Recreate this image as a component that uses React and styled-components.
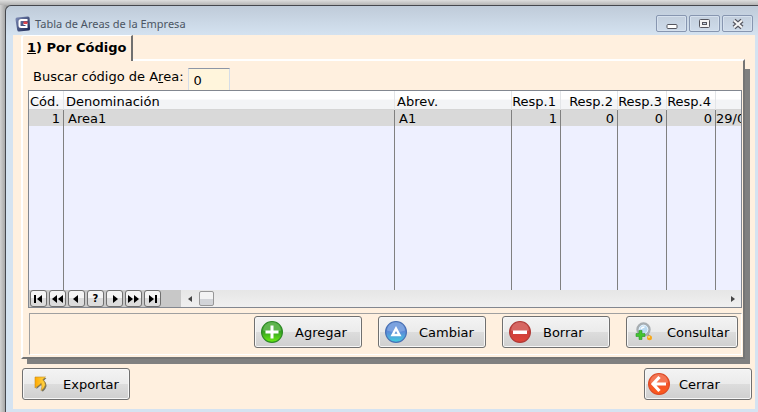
import React, { useState } from 'react';
import styled, { createGlobalStyle } from 'styled-components';

const GlobalStyle = createGlobalStyle`
  * {
    box-sizing: border-box;
  }
  body {
    margin: 0;
    overflow: hidden;
    font-family: 'DejaVu Sans', Verdana, sans-serif;
    font-size: 13px;
    color: #000;
  }
  button, input {
    font: inherit;
    color: inherit;
  }
`;

const Desktop = styled.div`
  min-height: 100vh;
  padding: 5px 0 0 5px;
  background: linear-gradient(#dedede, #b4b4b4 5px, transparent 5px),
    linear-gradient(90deg, #d2d2d2, #a8a8a8 5px);
`;

const Window = styled.main`
  display: flex;
  flex-direction: column;
  min-height: calc(100vh - 5px);
  padding: 0 3px 3px 7px;
  border-top: 1px solid #45474d;
  border-left: 1px solid #45474d;
  border-top-left-radius: 6px;
  background: linear-gradient(#bfcbd9, #d5e3f1 30px);
`;

const TitleBar = styled.header`
  display: flex;
  align-items: center;
  height: 29px;
  padding: 6px 2px 0;
`;

const Title = styled.h1`
  flex: 1;
  margin: 0 0 0 4px;
  font-family: 'Noto Sans', 'Open Sans', sans-serif;
  font-size: 11px;
  font-weight: 400;
  line-height: 16px;
  color: #4b5563;
`;

const WindowButtons = styled.div`
  display: flex;
  gap: 2px;
`;

const WindowButton = styled.button`
  display: flex;
  align-items: center;
  justify-content: center;
  width: 31px;
  height: 17px;
  padding: 0;
  border: 1px solid #8796b0;
  border-radius: 2px;
  background: linear-gradient(#c3cfdd, #cedbea);
  box-shadow: inset 0 0 0 1px #d6e1ee;
`;

const Body = styled.div`
  flex: 1;
  padding: 0 3px 9px 8px;
  background: #fff0df;
`;

const TabBar = styled.div`
  display: flex;
`;

const Tab = styled.button`
  position: relative;
  z-index: 1;
  height: 26px;
  margin-bottom: -2px;
  padding: 0 5px 1px 4px;
  border: solid #fff;
  border-width: 1px 2px 0 2px;
  border-right-color: #707070;
  border-radius: 3px 0 0 0;
  background: #fff0df;
  font-weight: 700;
  line-height: 20px;
`;

const Sheet = styled.section`
  position: relative;
  z-index: 0;
  margin-right: 7px;
  &::before {
    content: '';
    position: absolute;
    z-index: -1;
    inset: 10px -5px -5px 6px;
    background: #808080;
  }
`;

const SheetFace = styled.div`
  padding: 7px 1px 2px 5px;
  border: 2px solid #fff;
  border-right-color: #757575;
  border-bottom-color: #757575;
  background: #fff0df;
`;

const SearchRow = styled.div`
  display: flex;
  gap: 4px;
  padding-left: 5px;
  line-height: 18px;
`;

const SearchInput = styled.input`
  width: 42px;
  height: 22px;
  padding: 1px 5px 0;
  border: 1px solid #d5dde8;
  border-top-color: #8d95a5;
  border-bottom: 0;
  background: #fff5dc;
  outline: none;
`;

const List = styled.div`
  border: 1px solid #828790;
  background: #eef0ff;
`;

const Table = styled.table`
  width: 100%;
  table-layout: fixed;
  border-collapse: separate;
  border-spacing: 0;
  line-height: 15px;
  white-space: nowrap;
`;

const Col = styled.col`
  width: ${(props) => props.$width};
`;

const HeadCell = styled.th`
  height: 19px;
  padding: ${(props) => (props.$right ? '2px 4px 0 0' : '2px 0 0 2px')};
  overflow: hidden;
  border-right: 1px solid #e3e5e8;
  border-bottom: 1px solid #d5d5d5;
  background: linear-gradient(#fff 45%, #f3f4f6 50%);
  font-weight: 400;
  text-align: ${(props) => (props.$right ? 'right' : 'left')};
  &:first-child {
    padding-left: 1px;
  }
  &:last-child {
    border-right: 0;
  }
`;

const Cell = styled.td`
  height: 16px;
  padding: ${(props) => (props.$right ? '1px 3px 0 0' : '1px 0 0 4px')};
  overflow: hidden;
  border-right: 1px solid #808080;
  background: ${(props) => (props.$selected ? '#d9d9d9' : 'transparent')};
  text-align: ${(props) => (props.$right ? 'right' : 'left')};
  &:last-child {
    padding-left: 0;
    border-right: 0;
  }
`;

const FillRow = styled.tr`
  height: 164px;
`;

const ListFooter = styled.div`
  display: flex;
  height: 17px;
`;

const NavBar = styled.div`
  display: flex;
  gap: 2px;
  width: 152px;
  padding: 0 1px;
  background: #c8c8c8;
`;

const NavButton = styled.button`
  display: flex;
  align-items: center;
  justify-content: center;
  width: 17px;
  height: 17px;
  padding: 0;
  border: 1px solid #707070;
  border-radius: 3px;
  background: linear-gradient(#f4f4f4 50%, #dcdcdc 50%);
  font-size: 10px;
  font-weight: 700;
  line-height: 14px;
`;

const ScrollBar = styled.div`
  display: flex;
  flex: 1;
  align-items: center;
  background: linear-gradient(#e6e6e6, #f0f0f0);
`;

const ScrollButton = styled.button`
  display: flex;
  align-items: center;
  justify-content: center;
  width: 18px;
  height: 16px;
  padding: 0;
  border: 0;
  background: none;
`;

const ScrollTrack = styled.div`
  flex: 1;
`;

const ScrollThumb = styled.div`
  width: 15px;
  height: 15px;
  border: 1px solid #979797;
  border-radius: 2px;
  background: linear-gradient(#f3f3f3 50%, #d2d4d8 50%);
`;

const Actions = styled.div`
  display: flex;
  justify-content: flex-end;
  gap: 16px;
  height: 42px;
  margin: 5px 0 0 1px;
  padding: 2px 3px 0;
  border: 1px solid #fff;
  border-top-color: #a0a0a0;
  border-left-color: #a0a0a0;
`;

const Footer = styled.footer`
  display: flex;
  justify-content: space-between;
  padding: 9px 0 0 1px;
`;

const ActionButton = styled.button`
  display: flex;
  align-items: center;
  width: ${(props) => (props.$wide ? '112px' : '108px')};
  height: 32px;
  padding: 0 0 0 ${(props) => (props.$tight ? '3px' : '6px')};
  border: 1px solid #707070;
  border-radius: 3px;
  background: linear-gradient(#f3f3f3, #ebebeb 50%, #dddddd 50%, #cfcfcf);
  box-shadow: inset 0 0 0 1px #f7f7f7;
  svg {
    flex: none;
    margin-right: ${(props) => (props.$tight ? '9px' : '12px')};
  }
`;

const columns = [
  { title: 'Cód.', width: '35px' },
  { title: 'Denominación', width: '331px' },
  { title: 'Abrev.', width: '117px' },
  { title: 'Resp.1', width: '49px', right: true },
  { title: 'Resp.2', width: '57px', right: true },
  { title: 'Resp.3', width: '49px', right: true },
  { title: 'Resp.4', width: '49px', right: true },
  { title: '', width: 'auto' },
];

const areas = [
  { codigo: 1, nombre: 'Area1', abrev: 'A1', resp: [1, 0, 0, 0], fecha: '29/0' },
];

const navButtons = [
  { label: 'Primero', path: 'M1 1h2v8H1zM9 1v8L4 5z' },
  { label: 'Página anterior', path: 'M5 1v8L0 5zM11 1v8L6 5z' },
  { label: 'Anterior', path: 'M7 1v8L2 5z' },
  { label: 'Buscar' },
  { label: 'Siguiente', path: 'M4 1v8L9 5z' },
  { label: 'Página siguiente', path: 'M0 1v8L5 5zM6 1v8L11 5z' },
  { label: 'Último', path: 'M2 1v8L7 5zM8 1h2v8H8z' },
];

function AppIcon() {
  return (
    <svg width="16" height="16" viewBox="0 0 16 16">
      <defs>
        <linearGradient id="app" x2="1" y2="1">
          <stop offset="0" stopColor="#8290ba" />
          <stop offset="1" stopColor="#14204e" />
        </linearGradient>
      </defs>
      <path d="M2 1.500 13 .5q1.500 0 1.600 1.500L15 13q0 1.500-1.500 1.500L4 15.500q-1.500 0-1.800-1.500L.5 3.500Q.4 1.700 2 1.500z" fill="url(#app)" />
      <path d="M12.500 4H6.200Q4.500 4 4.500 5.500v4Q4.500 11 6.200 11h5.300V8H8.500" fill="none" stroke="#fff" strokeWidth="2" />
      <path d="M8.500 5.500h4v2.500h-4z" fill="#e0444a" />
    </svg>
  );
}

function RoundIcon({ id, top, bottom, edge, children }) {
  return (
    <svg width="22" height="22" viewBox="0 0 22 22">
      <defs>
        <linearGradient id={id} x2="0" y2="1">
          <stop offset="0" stopColor={top} />
          <stop offset="0.5" stopColor={top} />
          <stop offset="1" stopColor={bottom} />
        </linearGradient>
      </defs>
      <circle cx="11" cy="11" r="10.400" fill={`url(#${id})`} stroke={edge} strokeWidth="1.200" />
      <path d="M2 9.500a9 8.500 0 0 1 18 0Q11 13 2 9.500z" fill="#fff" opacity="0.200" />
      {children}
    </svg>
  );
}

function AddIcon() {
  return (
    <RoundIcon id="add" top="#37a322" bottom="#6cf00e" edge="#2d8a25">
      <path d="M9.500 4.500h3v5h5v3h-5v5h-3v-5h-5v-3h5z" fill="#fff" />
    </RoundIcon>
  );
}

function ChangeIcon() {
  return (
    <RoundIcon id="change" top="#5b8bd8" bottom="#41cfe0" edge="#4870b4">
      <path d="M11 7.500 14.500 14h-7z" fill="none" stroke="#fff" strokeWidth="2.400" />
    </RoundIcon>
  );
}

function DeleteIcon() {
  return (
    <RoundIcon id="delete" top="#cc403b" bottom="#e04438" edge="#b03a37">
      <path d="M4 9.500h14v3.500H4z" fill="#fff" />
    </RoundIcon>
  );
}

function CloseIcon() {
  return (
    <RoundIcon id="close" top="#f2552b" bottom="#ff5a18" edge="#dd4a26">
      <path d="M11.500 4 5 11l6.500 7M5.500 11H18" fill="none" stroke="#fff" strokeWidth="3.200" />
    </RoundIcon>
  );
}

function SearchIcon() {
  return (
    <svg width="22" height="22" viewBox="0 0 22 22">
      <path d="m14 12 2.500 4" stroke="#8b98a5" strokeWidth="2" />
      <circle cx="10.500" cy="8.500" r="6" fill="#b9d9f0" stroke="#a7adb1" strokeWidth="2.400" />
      <circle cx="10.500" cy="8.500" r="4.300" fill="none" stroke="#e9f5fd" strokeWidth="1" />
      <path d="M8 8q1-2 3.500-2" fill="none" stroke="#fff" strokeWidth="1.500" />
      <circle cx="16.500" cy="16.800" r="2.500" fill="#f7a81b" />
      <circle cx="16" cy="16" r="1" fill="#ffe07a" />
      <path d="M6 9.500h3v3h3v3H9v3H6v-3H3v-3h3z" fill="#43c42f" stroke="#2c972b" strokeWidth="0.600" />
    </svg>
  );
}

function ExportIcon() {
  return (
    <svg width="22" height="22" viewBox="0 0 22 22">
      <defs>
        <linearGradient id="export" x2="1" y2="0">
          <stop offset="0" stopColor="#ffa800" />
          <stop offset="1" stopColor="#ffd84a" />
        </linearGradient>
      </defs>
      <path d="M7 5h10.500L15 7.500q5.500 5-1 11l-1.500-.5q2-4 .5-6.500l-2 1.500-3.500 3z" fill="#77745f" />
      <path d="M6 4h10.500l-2.800 2.700q6 5.300-1.700 10.800 1.700-4 .2-7.200L10.300 12 6 15z" fill="url(#export)" stroke="#c58b1c" strokeWidth="0.600" />
    </svg>
  );
}

function App() {
  const [codigo, setCodigo] = useState('0');

  return (
    <>
      <GlobalStyle />
      <Desktop>
        <Window>
          <TitleBar>
            <AppIcon />
            <Title>Tabla de Areas de la Empresa</Title>
            <WindowButtons>
              <WindowButton aria-label="Minimizar">
                <svg width="12" height="12">
                  <rect x="1" y="6.500" width="10" height="4" rx="1" fill="#fff" stroke="#55565f" />
                </svg>
              </WindowButton>
              <WindowButton aria-label="Maximizar">
                <svg width="12" height="12">
                  <rect x="0.500" y="1.500" width="10" height="8" rx="1" fill="#f3f3f3" stroke="#55565f" />
                  <rect x="3.500" y="4.500" width="4" height="2" fill="#c8d4e2" stroke="#55565f" />
                </svg>
              </WindowButton>
              <WindowButton aria-label="Cerrar ventana">
                <svg width="12" height="12">
                  <path d="m2 2.500 8 7m0-7-8 7" stroke="#55565f" strokeWidth="4.400" />
                  <path d="m2 2.500 8 7m0-7-8 7" stroke="#f6f6f6" strokeWidth="2.200" />
                </svg>
              </WindowButton>
            </WindowButtons>
          </TitleBar>
          <Body>
            <TabBar role="tablist">
              <Tab role="tab" aria-selected="true">
                <u>1</u>) Por Código
              </Tab>
            </TabBar>
            <Sheet>
              <SheetFace>
                <SearchRow>
                  <label htmlFor="codigo">
                    Buscar código de A<u>r</u>ea:
                  </label>
                  <SearchInput
                    id="codigo"
                    value={codigo}
                    onChange={(event) => setCodigo(event.target.value)}
                  />
                </SearchRow>
                <List>
                  <Table>
                    <colgroup>
                      {columns.map((column, i) => (
                        <Col key={i} $width={column.width} />
                      ))}
                    </colgroup>
                    <thead>
                      <tr>
                        {columns.map((column, i) => (
                          <HeadCell key={i} $right={column.right}>
                            {column.title}
                          </HeadCell>
                        ))}
                      </tr>
                    </thead>
                    <tbody>
                      {areas.map((area) => (
                        <tr key={area.codigo}>
                          <Cell $selected $right>{area.codigo}</Cell>
                          <Cell $selected>{area.nombre}</Cell>
                          <Cell $selected>{area.abrev}</Cell>
                          {area.resp.map((value, i) => (
                            <Cell key={i} $selected $right>{value}</Cell>
                          ))}
                          <Cell $selected>{area.fecha}</Cell>
                        </tr>
                      ))}
                      <FillRow>
                        {columns.map((column, i) => (
                          <Cell key={i} />
                        ))}
                      </FillRow>
                    </tbody>
                  </Table>
                  <ListFooter>
                    <NavBar>
                      {navButtons.map((button) => (
                        <NavButton key={button.label} aria-label={button.label}>
                          {button.path ? (
                            <svg width="11" height="10">
                              <path d={button.path} />
                            </svg>
                          ) : (
                            '?'
                          )}
                        </NavButton>
                      ))}
                    </NavBar>
                    <ScrollBar>
                      <ScrollButton aria-label="Desplazar a la izquierda">
                        <svg width="5" height="8">
                          <path d="M4 1v6L0 4z" fill="#444" />
                        </svg>
                      </ScrollButton>
                      <ScrollThumb />
                      <ScrollTrack />
                      <ScrollButton aria-label="Desplazar a la derecha">
                        <svg width="5" height="8">
                          <path d="M1 1v6l4-3z" fill="#444" />
                        </svg>
                      </ScrollButton>
                    </ScrollBar>
                  </ListFooter>
                </List>
                <Actions>
                  <ActionButton>
                    <AddIcon />
                    Agregar
                  </ActionButton>
                  <ActionButton>
                    <ChangeIcon />
                    Cambiar
                  </ActionButton>
                  <ActionButton>
                    <DeleteIcon />
                    Borrar
                  </ActionButton>
                  <ActionButton $wide>
                    <SearchIcon />
                    Consultar
                  </ActionButton>
                </Actions>
              </SheetFace>
            </Sheet>
            <Footer>
              <ActionButton>
                <ExportIcon />
                Exportar
              </ActionButton>
              <ActionButton $tight>
                <CloseIcon />
                Cerrar
              </ActionButton>
            </Footer>
          </Body>
        </Window>
      </Desktop>
    </>
  );
}

export default App;
